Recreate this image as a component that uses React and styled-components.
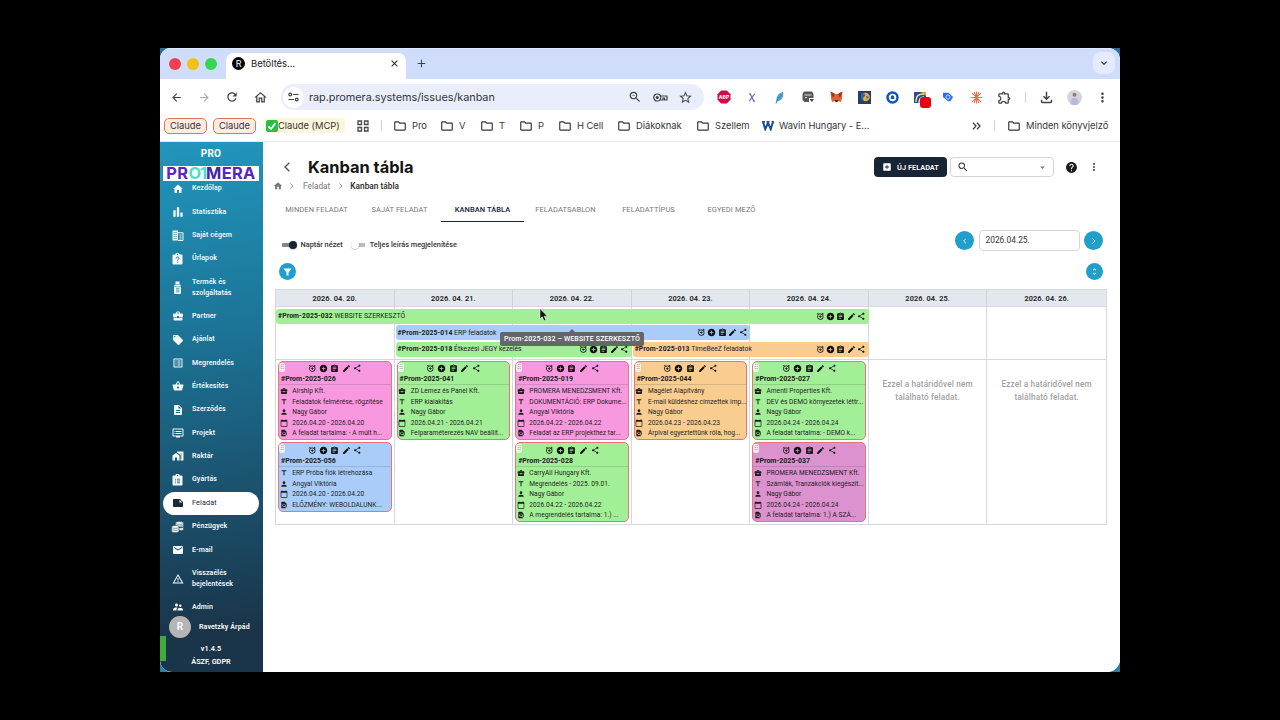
import React from 'react';
import styled, { createGlobalStyle } from 'styled-components';
import {
  MdHome, MdBarChart, MdBusinessCenter, MdLocalOffer, MdListAlt, MdShoppingBasket,
  MdDescription, MdDvr, MdHomeWork, MdNote, MdEmail, MdWarningAmber, MdSupervisorAccount,
  MdAddAlarm, MdAddCircle, MdAssignment, MdEdit, MdShare, MdTitle, MdPerson, MdCalendarToday, MdFindInPage,
  MdAddBox, MdHelp, MdMoreVert, MdSearch, MdArrowDropDown, MdUnfoldMore,
  MdZoomOut, MdStarBorder, MdOutlineExtension, MdOutlineFileDownload, MdArrowBack, MdArrowForward,
  MdRefresh, MdOutlineHome, MdClose, MdAdd, MdOutlineFolder, MdKeyboardArrowDown,
} from 'react-icons/md';

const GlobalStyle = createGlobalStyle`
  * {
    box-sizing: border-box;
  }

  body {
    margin: 0;
    background: #000;
    font-family: Roboto, 'Liberation Sans', sans-serif;
    overflow: hidden;
  }

  svg {
    display: block;
    flex: none;
  }
`;

const Screen = styled.div`
  width: 1280px;
  height: 720px;
  padding: 48px 160px;
  background: #000;
`;

const Desktop = styled.div`
  width: 960px;
  height: 624px;
  background: linear-gradient(to bottom, #2f6d8f, #2b7f9c);
`;

const Window = styled.div`
  height: 624px;
  display: flex;
  flex-direction: column;
  background: #fff;
  border-radius: 11px 12px 13px 12px;
  overflow: hidden;
`;

/* ---------- browser chrome ---------- */

const TabStrip = styled.div`
  height: 31px;
  display: flex;
  align-items: flex-end;
  background: #d0ddfa;
  border-top: 1px solid #dfe8fb;
`;

const Lights = styled.div`
  width: 66px;
  height: 31px;
  display: flex;
  align-items: center;
  gap: 6px;
  padding-left: 9px;
`;

const Light = styled.span`
  width: 12px;
  height: 12px;
  border-radius: 50%;
  background: ${({ $color }) => $color};
`;

const BrowserTab = styled.div`
  width: 180px;
  height: 26px;
  display: flex;
  align-items: center;
  padding: 0 6px 5px 6px;
  background: #fff;
  border-radius: 8px 8px 0 0;
  font: 9.5px Inter, sans-serif;
  letter-spacing: -0.05px;
  color: #222;

  .label {
    flex: 1;
    margin-left: 6px;
  }
`;

const Favicon = styled.span`
  width: 13px;
  height: 13px;
  border-radius: 50%;
  background: #000;
  color: #fff;
  font: 9px/13px Inter, sans-serif;
  text-align: center;
`;

const NewTab = styled.div`
  flex: 1;
  height: 31px;
  display: flex;
  align-items: center;
  padding-left: 9px;
  color: #3b4253;
`;

const TabSearch = styled.div`
  width: 22px;
  height: 22px;
  margin: 0 5px 5px 0;
  border-radius: 7px;
  display: flex;
  align-items: center;
  justify-content: center;
  background: #e3ebfc;
  color: #222;
`;

const Toolbar = styled.div`
  height: 36px;
  display: flex;
  align-items: center;
  padding-left: 2px;
  color: #3f4247;
`;

const ToolCell = styled.div`
  width: ${({ $w = 28 }) => $w}px;
  display: flex;
  justify-content: center;
  align-items: center;
  position: relative;
  color: ${({ $color }) => $color || 'inherit'};
`;

const AddressBar = styled.div`
  width: 423px;
  height: 26px;
  margin: 0 6px 0 7px;
  display: flex;
  align-items: center;
  background: #eaeefa;
  border-radius: 13px;
  padding: 0 6.5px 0 2px;

  .url {
    flex: 1;
    margin-left: 5px;
    font: 10.9px Inter, sans-serif;
    letter-spacing: -0.05px;
    color: #33363c;
  }
`;

const SiteInfo = styled.span`
  width: 21px;
  height: 21px;
  border-radius: 50%;
  background: #fff;
  display: flex;
  align-items: center;
  justify-content: center;
`;

const Divider = styled.span`
  width: 1px;
  height: 11px;
  background: #c6d3ee;
`;

const RedBadge = styled.span`
  position: absolute;
  left: 14px;
  top: 6px;
  width: 11px;
  height: 11px;
  border-radius: 3px;
  background: #e60012;
`;

const Bookmarks = styled.div`
  height: 27px;
  display: flex;
  align-items: center;
  padding: 0 12px 5px 4px;
  border-bottom: 1px solid #e8e8ea;
  font: 9.4px Inter, sans-serif;
  letter-spacing: -0.03px;
  color: #33363b;
`;

const Chip = styled.span`
  width: 43px;
  height: 16px;
  margin-right: 6px;
  border: 1px solid #d5795b;
  border-radius: 5px;
  background: #fdeae1;
  line-height: 14px;
  text-align: center;
`;

const McpChip = styled.span`
  width: 82px;
  height: 15px;
  margin-left: 1px;
  display: flex;
  align-items: center;
  padding-left: 3px;
  background: #fcf7d8;
  border-radius: 4px;
  white-space: nowrap;
`;

const Bookmark = styled.span`
  width: ${({ $w }) => $w}px;
  display: flex;
  align-items: center;
  gap: 5px;
  white-space: nowrap;
`;

/* ---------- app ---------- */

const AppBody = styled.div`
  flex: 1;
  display: flex;
  min-height: 0;
`;

const Sidebar = styled.nav`
  width: 103px;
  position: relative;
  display: flex;
  flex-direction: column;
  background: linear-gradient(172deg, #2196bd 0%, #1c7598 35%, #1b5673 62%, #1a3449 92%);
  border-radius: 0 0 0 12px;
  color: #fff;
`;

const Plan = styled.div`
  height: 24px;
  line-height: 24px;
  text-align: center;
  font-size: 10px;
  font-weight: 700;
  letter-spacing: 0.2px;
  padding-right: 1px;
`;

const Logo = styled.div`
  position: relative;
  z-index: 1;
  width: 96px;
  height: 15px;
  margin: 0 0 -4px 3px;
  background: #fff;
  display: flex;
  align-items: center;
  justify-content: center;
  font: 700 16.4px/15px Inter, sans-serif;
  letter-spacing: 0.35px;
  color: #5a24c9;

  .mint {
    color: #4be0c8;
    letter-spacing: -1px;
  }

  .dark {
    color: #4425a8;
  }
`;

const NavItem = styled.div`
  height: ${({ $tall }) => ($tall ? 34.2 : 23.37)}px;
  width: 96px;
  margin-left: 3px;
  display: flex;
  align-items: center;
  padding-left: 8.5px;
  gap: 8.5px;
  border-radius: 12px;
  font-size: 7px;
  line-height: 10.7px;
  font-weight: 600;
  letter-spacing: 0.1px;
  white-space: pre;
  background: ${({ $active }) => ($active ? '#fff' : 'transparent')};
  color: ${({ $active }) => ($active ? '#1c2b3a' : '#f2f8fb')};

  ${({ $active }) => $active && 'font-weight: 400; font-size: 7.3px;'}
`;

const UserRow = styled.div`
  height: 22px;
  margin-top: -3px;
  display: flex;
  align-items: center;
  gap: 8px;
  padding-left: 9px;
  font-size: 7px;
  font-weight: 600;
  letter-spacing: 0.12px;
`;

const Avatar = styled.span`
  width: 22px;
  height: 22px;
  border-radius: 50%;
  background: #b5b5b5;
  font-size: 10px;
  line-height: 22px;
  text-align: center;
`;

const Version = styled.div`
  padding: 4px 1px 0 0;
  text-align: center;
  font-size: 7.3px;
  font-weight: 600;
  line-height: 13px;
`;

const GreenFlag = styled.span`
  position: absolute;
  left: 0;
  bottom: 11px;
  width: 6px;
  height: 25px;
  background: #43a83f;
`;

const Main = styled.main`
  flex: 1;
  padding: 14px 12px 0 12px;
  background: #fff;
  color: #1b1b1b;
`;

const Row = styled.div`
  display: flex;
  align-items: center;
`;

const HeaderRow = styled(Row)`
  height: 22px;
  padding-right: 8px;
`;

const Title = styled.h1`
  flex: 1;
  margin: -1px 0 0 9px;
  font: 700 16.4px/22px Inter, sans-serif;
  color: #141414;
`;

const NewTaskButton = styled.button`
  width: 73px;
  height: 20px;
  margin-right: 3px;
  padding: 0;
  border: 0;
  border-radius: 4px;
  display: flex;
  align-items: center;
  justify-content: center;
  gap: 5px;
  background: #182534;
  color: #fff;
  font: 600 7.4px Roboto, sans-serif;
`;

const SearchBox = styled(Row)`
  width: 104px;
  height: 20px;
  padding: 0 5px 0 6px;
  justify-content: space-between;
  border: 1px solid #d4d5da;
  border-radius: 4px;
  color: #333;
`;

const Crumbs = styled(Row)`
  height: 16px;
  font-size: 8.3px;
  color: #777;

  .current {
    color: #2a2a2a;
    font-weight: 500;
  }
`;

const Tabs = styled.div`
  height: 28px;
  display: flex;
  align-items: flex-end;
`;

const Tab = styled.div`
  width: 83px;
  height: 24px;
  line-height: 24px;
  text-align: center;
  font-size: 7.5px;
  letter-spacing: 0.08px;
  white-space: nowrap;
  color: ${({ $active }) => ($active ? '#182534' : '#777')};
  font-weight: ${({ $active }) => ($active ? 500 : 400)};
  border-bottom: ${({ $active }) => ($active ? '1.5px solid #182534' : '1.5px solid transparent')};
`;

const Controls = styled(Row)`
  height: 22px;
  margin-top: 7.5px;
  padding-right: 5px;
  font-size: 7.35px;
  font-weight: 500;
  color: #333;

  .left {
    flex: 1;
    display: flex;
    align-items: center;
    padding: 8px 0 0 6.5px;
  }
`;

const Toggle = styled.span`
  width: 15px;
  height: 8px;
  margin: 0 4px 0 0;
  display: flex;
  align-items: center;
  justify-content: ${({ $on }) => ($on ? 'flex-end' : 'flex-start')};
  background: linear-gradient(${({ $on }) => ($on ? '#7f868e, #7f868e' : '#bbb, #bbb')}) center / 14px 4px no-repeat;
  border-radius: 4px;

  &:after {
    content: '';
    width: 8px;
    height: 8px;
    border-radius: 50%;
    background: ${({ $on }) => ($on ? '#182534' : '#fff')};
    box-shadow: 0 0.5px 1px rgba(0, 0, 0, 0.35);
  }
`;

const RoundButton = styled.span`
  width: ${({ $size }) => $size}px;
  height: ${({ $size }) => $size}px;
  border-radius: 50%;
  display: flex;
  align-items: center;
  justify-content: center;
  background: #219fcb;
  color: #fff;
`;

const DateField = styled.span`
  width: 101px;
  height: 21px;
  margin: 0 4.5px;
  padding-left: 6px;
  border: 1px solid #d4d5da;
  border-radius: 4px;
  font-size: 8.4px;
  font-weight: 400;
  line-height: 19px;
`;

const FilterRow = styled(Row)`
  height: 17px;
  margin: 11.5px 5px 8.5px 4px;
  justify-content: space-between;
`;

const Board = styled.div`
  position: relative;
  width: 832px;
  border: 1px solid #d6d8dc;
`;

const Week = styled.div`
  display: grid;
  grid-template-columns: repeat(7, minmax(0, 1fr));
`;

const DayHead = styled.div`
  height: 17px;
  line-height: 18px;
  text-align: center;
  background: #e3e8ee;
  border-right: 1px solid #cfd3d9;
  border-bottom: 1px solid #d6d8dc;
  font-size: 7.4px;
  font-weight: 600;
  letter-spacing: 0.06px;

  &:last-child {
    border-right: 0;
  }
`;

const Lanes = styled(Week)`
  height: 53px;
  grid-template-rows: repeat(3, 15px);
  row-gap: 1.5px;
  padding-top: 2px;
  border-bottom: 1px solid #d6d8dc;
`;

const LaneCell = styled.div`
  grid-column: ${({ $col }) => $col};
  grid-row: 1 / 4;
  margin: -2px 0 -4px;
  border-right: ${({ $col }) => ($col < 7 ? '1px solid #d6d8dc' : '0')};
`;

const Bar = styled.div`
  grid-column: ${({ $from, $to }) => `${$from} / ${$to + 1}`};
  grid-row: ${({ $lane }) => $lane};
  margin-left: ${({ $from }) => ($from > 1 ? 1 : 0)}px;
  padding: 0 3px 0 2px;
  display: flex;
  align-items: center;
  justify-content: space-between;
  background: ${({ $color }) => $color};
  border-radius: 3px;
  font-size: 6.8px;
  letter-spacing: 0;
  white-space: pre;
  z-index: 1;

  b {
    font-weight: 700;
    letter-spacing: 0.12px;
  }
`;

const Days = styled(Week)`
  height: 164px;
`;

const Day = styled.div`
  min-width: 0;
  padding: 1px 2px 0;
  display: flex;
  flex-direction: column;
  gap: 2px;
  border-right: 1px solid #d6d8dc;

  &:last-child {
    border-right: 0;
  }
`;

const Empty = styled.p`
  margin: 17px 0 0;
  text-align: center;
  font-size: 8.2px;
  font-weight: 500;
  line-height: 13px;
  letter-spacing: 0.16px;
  color: #a2a2a2;
  white-space: pre;
`;

const Card = styled.article`
  position: relative;
  padding: 2.2px 0 1.2px;
  background: ${({ $color }) => $color};
  border: 1.5px solid #e2757e;
  border-radius: 5px;
`;

const Handle = styled.span`
  position: absolute;
  left: 0;
  top: 1px;
  width: 6px;
  height: 9px;
  background: rgba(255, 255, 255, 0.75);
  border-radius: 2px;
  color: #888;
  font-size: 6px;
  line-height: 8px;
  text-align: center;
`;

const Actions = styled.div`
  display: flex;
  align-items: center;
  justify-content: center;
  gap: ${({ $gap }) => $gap}px;
  color: #111;
`;

const CardTitle = styled.div`
  height: 11px;
  margin: 1px 0 1.6px;
  padding: 0 2px;
  line-height: 10.5px;
  font-size: 7px;
  font-weight: 700;
  letter-spacing: 0;
  border-bottom: 1px solid rgba(80, 80, 80, 0.2);
`;

const CardLine = styled.div`
  height: 10.4px;
  display: flex;
  align-items: center;
  gap: 4.5px;
  padding-left: 0.7px;
  font-size: 6.6px;
  letter-spacing: 0.03px;
  white-space: nowrap;
  color: #1d1d1d;
`;

const Tooltip = styled.div`
  position: absolute;
  left: 224px;
  top: 42px;
  z-index: 3;
  width: 144px;
  height: 14px;
  border-radius: 2px;
  background: rgba(92, 94, 97, 0.93);
  color: #fff;
  font-size: 7.1px;
  font-weight: 500;
  line-height: 14px;
  text-align: center;
  letter-spacing: 0.1px;

  &:before {
    content: '';
    position: absolute;
    left: 69px;
    top: -3px;
    border: 3px solid transparent;
    border-top: 0;
    border-bottom-color: rgba(92, 94, 97, 0.93);
  }
`;

const Pointer = styled.svg`
  position: absolute;
  left: 263px;
  top: 18px;
  z-index: 4;
`;

const GREEN = '#a2ef98';
const BLUE = '#a9cdf8';
const ORANGE = '#f9cd90';
const PINK = '#f898de';
const PURPLE = '#dc92cf';

const FormIcon = () => (
  <svg width="11" height="12" viewBox="0 0 22 24" fill="currentColor">
    <path d="M19 3h-4a4 4 0 0 0-8 0H3a2 2 0 0 0-2 2v16a2 2 0 0 0 2 2h16a2 2 0 0 0 2-2V5a2 2 0 0 0-2-2zm-8-1.500a1.500 1.500 0 1 1 0 3 1.500 1.500 0 0 1 0-3z" />
    <path d="M8 11c0-4 6-4 6-.5 0 2-3 2.200-3 4.500M11 17.200v2" fill="none" stroke="#23759a" strokeWidth="2" />
  </svg>
);

const ClipboardIcon = () => (
  <svg width="11" height="12" viewBox="0 0 22 24" fill="currentColor">
    <path d="M19 3h-4a4 4 0 0 0-8 0H3a2 2 0 0 0-2 2v16a2 2 0 0 0 2 2h16a2 2 0 0 0 2-2V5a2 2 0 0 0-2-2zm-8-1.500a1.500 1.500 0 1 1 0 3 1.500 1.500 0 0 1 0-3z" />
    <path d="M6 10.500h2M10 10.500h6M6 14h2M10 14h6M6 17.500h2M10 17.500h6" fill="none" stroke="#1c5773" strokeWidth="1.600" />
  </svg>
);

const BottleIcon = () => (
  <svg width="11" height="14" viewBox="0 0 22 28" fill="currentColor">
    <path d="M7 1h8v5H7zM6 7h10l2 3H4z" />
    <path d="M4 11h14v13a2 2 0 0 1-2 2H6a2 2 0 0 1-2-2z" />
    <path d="M8 14.500h7M8 18h7M8 21.500h7" stroke="#2280a5" strokeWidth="1.500" />
  </svg>
);

const BuildingIcon = () => (
  <svg width="12" height="11" viewBox="0 0 24 22" fill="currentColor">
    <path d="M1 1h11v20H1z" />
    <path d="M12 5.500h10V21H12" fill="none" stroke="currentColor" strokeWidth="2" />
    <path d="M15 10h4M15 14h4M15 18h4" stroke="currentColor" strokeWidth="2" />
    <path d="M3 5h7M3 9h7M3 13h7M3 17h7" stroke="#2a86ab" strokeWidth="1.200" />
  </svg>
);

const CoinsIcon = () => (
  <svg width="13" height="12" viewBox="0 0 26 24" fill="currentColor" stroke="#1b4a65" strokeWidth="1">
    <path d="M9 4v8h16V4c0-4-16-4-16 0z" />
    <path d="M9 4.500c1 3 15 3 16 0M9 8c1 3 15 3 16 0M10 12c3 3 14 2 15 0v5c-1 2-5 2-7 2" />
    <path d="M1 12v8c0 4 15 4 15 0v-8c0-4-15-4-15 0z" />
    <path d="M1 12.500c1 3 14 3 15 0M1 16.500c1 3 14 3 15 0" fill="none" />
  </svg>
);

const FunnelIcon = () => (
  <svg width="9" height="8" viewBox="0 0 9 8" fill="currentColor">
    <path d="M.5 .5h8L5.500 4.500v3h-2v-3z" />
  </svg>
);

const ChevronIcon = ({ size = 8, left }) => (
  <svg width={size * 0.6} height={size} viewBox="0 0 6 10" fill="none" stroke="currentColor" strokeWidth="1.4">
    <path d={left ? 'M5.300 .7L1 5l4.300 4.300' : 'M.7 .7L5 5 .7 9.300'} />
  </svg>
);

const TuneIcon = () => (
  <svg width="11" height="10" viewBox="0 0 22 20" fill="none" stroke="currentColor" strokeWidth="2.4">
    <circle cx="4.500" cy="5" r="2.800" />
    <path d="M10 5h11M1 15h11" />
    <circle cx="17.500" cy="15" r="2.800" />
  </svg>
);

const KeyIcon = () => (
  <svg width="15" height="9" viewBox="0 0 30 18" fill="none" stroke="currentColor" strokeWidth="2.400">
    <path d="M15 6h13v8h-5v-4h-3v4h-5" />
    <circle cx="8.500" cy="9" r="7" />
    <circle cx="8.500" cy="9" r="2" fill="currentColor" />
  </svg>
);

const AppsIcon = () => (
  <svg width="12" height="12" viewBox="0 0 12 12" fill="none" stroke="#44474c" strokeWidth="1.3">
    <path d="M1 1h3.500v3.500H1zM7.500 1H11v3.500H7.500zM1 7.500h3.500V11H1zM7.500 7.500H11V11H7.500z" />
  </svg>
);

const extensions = [
  <svg key="abp" width="14" height="14" viewBox="0 0 14 14">
    <path d="M4.200 .5h5.600l3.700 3.700v5.600l-3.700 3.700H4.200L.5 9.800V4.200z" fill="#cf0a45" />
    <text x="7" y="9" textAnchor="middle" fontFamily="Inter" fontSize="5" fontWeight="700" fill="#fff">ABP</text>
  </svg>,
  <svg key="x" width="8" height="9" viewBox="0 0 9 10" fill="none" strokeWidth="1.400">
    <path d="M1 1h1.500l4 8H8" stroke="#7a5cc4" />
    <path d="M7.500 1L1.500 9" stroke="#5b84c9" />
  </svg>,
  <svg key="feather" width="10" height="13" viewBox="0 0 10 13">
    <path d="M8 .5C3 3 1 5 1.500 10.500c4-.5 8-3 6.500-10z" fill="#55a5d2" />
    <path d="M1 12.500C2 8 4 6 7 3.500" stroke="#327ea8" fill="none" />
  </svg>,
  <svg key="mail" width="12" height="12" viewBox="0 0 12 12">
    <path d="M2 .5h8L11.500 3v4H7v4H2.500L.5 9V3z" fill="#56585a" />
    <path d="M2.500 4h7M3 6.500h2" stroke="#ddd" />
    <path d="M7.500 8H12l-2.200 3z" fill="#444" />
  </svg>,
  <svg key="fox" width="13" height="12" viewBox="0 0 13 12">
    <path d="M.5.5L5 3h3L12.500.5l-.6 7L11 11l-3-1H5l-3 1-.9-3.500z" fill="#e4602d" />
    <path d="M.5.5L5 3 3 7zM12.500.5L8 3l2 4z" fill="#913824" />
    <path d="M5 9h3l-.5 2h-2z" fill="#3b2620" />
  </svg>,
  <svg key="globe" width="13" height="13" viewBox="0 0 13 13">
    <path d="M0 0h13v13H0z" fill="#28405e" />
    <circle cx="7.500" cy="6" r="4.300" fill="#e8ad37" />
    <path d="M3 2l4 1v2L5 7l1 3-3-2zM8 5l3 1-2 2z" fill="#2a65c0" />
  </svg>,
  <svg key="ring" width="13" height="13" viewBox="0 0 13 13" fill="none">
    <circle cx="6.500" cy="6.500" r="5" stroke="#1554bb" strokeWidth="2.500" />
    <path d="M4.800 8V6a1.700 1.700 0 0 1 3.400 0v2z" fill="#1554bb" />
  </svg>,
  <React.Fragment key="rec">
    <svg width="13" height="13" viewBox="0 0 13 13">
      <path d="M0 1h12v11H0z" fill="#34506e" />
      <path d="M7 1h5v4z" fill="#e3963b" />
      <path d="M2 11c0-7 3-8 8-8M5 12c0-4 1-6 5-6" stroke="#dde6ef" strokeWidth="1.300" fill="none" />
    </svg>
    <RedBadge />
  </React.Fragment>,
  <svg key="tag" width="12" height="12" viewBox="0 0 13 12">
    <path d="M1 1.500h6L12 6 9 10.500H6.500L1 6z" fill="#2e71d6" />
    <circle cx="6.500" cy="6" r="2.200" fill="none" stroke="#c7dcfb" />
  </svg>,
  <svg key="claude" width="13" height="13" viewBox="0 0 13 13" stroke="#dc7656">
    <path d="M6.500 .5v12M.5 6.500h12M2.200 2.200l8.600 8.600M10.800 2.200l-8.600 8.600M4 .9l5 11.200M9 .9L4 12.100" strokeWidth="1.100" />
  </svg>,
  <MdOutlineExtension key="ext" size={15} />,
];

const folders = [
  ['Pro', 47], ['V', 40], ['T', 39], ['P', 39], ['H Cell', 59], ['Diákoknak', 79], ['Szellem', 66],
];

const navItems = [
  { label: 'Kezdőlap', icon: <MdHome size={12} /> },
  { label: 'Statisztika', icon: <MdBarChart size={14} /> },
  { label: 'Saját cégem', icon: <BuildingIcon /> },
  { label: 'Űrlapok', icon: <FormIcon /> },
  { label: 'Termék és\nszolgáltatás', icon: <BottleIcon />, tall: true },
  { label: 'Partner', icon: <MdBusinessCenter size={12} /> },
  { label: 'Ajánlat', icon: <MdLocalOffer size={12} /> },
  { label: 'Megrendelés', icon: <MdListAlt size={12} /> },
  { label: 'Értékesítés', icon: <MdShoppingBasket size={12} /> },
  { label: 'Szerződés', icon: <MdDescription size={12} /> },
  { label: 'Projekt', icon: <MdDvr size={12} /> },
  { label: 'Raktár', icon: <MdHomeWork size={12} /> },
  { label: 'Gyártás', icon: <ClipboardIcon /> },
  { label: 'Feladat', icon: <MdNote size={12} />, active: true },
  { label: 'Pénzügyek', icon: <CoinsIcon /> },
  { label: 'E-mail', icon: <MdEmail size={12} /> },
  { label: 'Visszaélés\nbejelentések', icon: <MdWarningAmber size={12} />, tall: true },
  { label: 'Admin', icon: <MdSupervisorAccount size={12} /> },
];

const bars = [
  { id: '032', name: 'WEBSITE SZERKESZTŐ', lane: 1, from: 1, to: 5, color: GREEN },
  { id: '014', name: 'ERP feladatok', lane: 2, from: 2, to: 4, color: BLUE },
  { id: '018', name: 'Étkezési JEGY kezelés', lane: 3, from: 2, to: 3, color: GREEN },
  { id: '013', name: 'TimeBeeZ feladatok', lane: 3, from: 4, to: 5, color: ORANGE },
];

const days = [
  {
    date: '2026. 04. 20.',
    cards: [
      { id: '026', color: PINK, company: 'Airship Kft.', title: 'Feladatok felmérése, rögzítése', user: 'Nagy Gábor', text: 'A feladat tartalma: - A múlt h...' },
      { id: '056', color: BLUE, title: 'ERP Próba fiók létrehozása', user: 'Angyal Viktória', text: 'ELŐZMÉNY: WEBOLDALUNK...' },
    ],
  },
  {
    date: '2026. 04. 21.',
    cards: [
      { id: '041', color: GREEN, company: 'ZD Lemez és Panel Kft.', title: 'ERP kialakítás', user: 'Nagy Gábor', text: 'Felparaméterezés NAV beállít...' },
    ],
  },
  {
    date: '2026. 04. 22.',
    cards: [
      { id: '019', color: PINK, company: 'PROMERA MENEDZSMENT Kft.', title: 'DOKUMENTÁCIÓ: ERP Dokume...', user: 'Angyal Viktória', text: 'Feladat az ERP projekthez tar...' },
      { id: '028', color: GREEN, company: 'CarryAll Hungary Kft.', title: 'Megrendelés - 2025. 09.01.', user: 'Nagy Gábor', text: 'A megrendelés tartalma: 1.) ...' },
    ],
  },
  {
    date: '2026. 04. 23.',
    cards: [
      { id: '044', color: ORANGE, company: 'Magélet Alapítvány', title: 'E-mail küldéshez címzettek imp...', user: 'Nagy Gábor', text: 'Árpival egyeztettünk róla, hog...' },
    ],
  },
  {
    date: '2026. 04. 24.',
    cards: [
      { id: '027', color: GREEN, company: 'Amenti Properties Kft.', title: 'DEV és DEMO környezetek léttr...', user: 'Nagy Gábor', text: 'A feladat tartalma: - DEMO k...' },
      { id: '037', color: PURPLE, company: 'PROMERA MENEDZSMENT Kft.', title: 'Számlák, Tranzakciók kiegészít...', user: 'Nagy Gábor', text: 'A feladat tartalma: 1.) A SZÁ...' },
    ],
  },
  { date: '2026. 04. 25.', cards: [] },
  { date: '2026. 04. 26.', cards: [] },
];

const TaskActions = ({ gap }) => (
  <Actions $gap={gap}>
    <MdAddAlarm size={8.5} />
    <MdAddCircle size={9} />
    <MdAssignment size={9} />
    <MdEdit size={9} />
    <MdShare size={8.5} />
  </Actions>
);

const TaskCard = ({ card, date }) => {
  const day = date.replace(/ /g, '').slice(0, -1);
  return (
    <Card $color={card.color}>
      <Handle>⠿</Handle>
      <TaskActions gap={2.6} />
      <CardTitle>#Prom-2025-{card.id}</CardTitle>
      {card.company && <CardLine><MdBusinessCenter size={8} />{card.company}</CardLine>}
      <CardLine><MdTitle size={8} />{card.title}</CardLine>
      <CardLine><MdPerson size={8} />{card.user}</CardLine>
      <CardLine><MdCalendarToday size={8} />{day} - {day}</CardLine>
      <CardLine><MdFindInPage size={8} />{card.text}</CardLine>
    </Card>
  );
};

const BrowserChrome = () => (
  <>
    <TabStrip>
      <Lights>
        <Light $color="#f23f50" />
        <Light $color="#f2c112" />
        <Light $color="#33d552" />
      </Lights>
      <BrowserTab>
        <Favicon>R</Favicon>
        <span className="label">Betöltés...</span>
        <MdClose size={11} />
      </BrowserTab>
      <NewTab><MdAdd size={13} /></NewTab>
      <TabSearch><MdKeyboardArrowDown size={12} /></TabSearch>
    </TabStrip>
    <Toolbar>
      <ToolCell><MdArrowBack size={13} /></ToolCell>
      <ToolCell $color="#a9abaf"><MdArrowForward size={13} /></ToolCell>
      <ToolCell><MdRefresh size={14} /></ToolCell>
      <ToolCell><MdOutlineHome size={15} /></ToolCell>
      <AddressBar>
        <SiteInfo><TuneIcon /></SiteInfo>
        <span className="url">rap.promera.systems/issues/kanban</span>
        <ToolCell $w={25}><MdZoomOut size={14} /></ToolCell>
        <ToolCell $w={25}><KeyIcon /></ToolCell>
        <ToolCell $w={25}><MdStarBorder size={15} /></ToolCell>
      </AddressBar>
      {extensions.map((icon) => <ToolCell key={icon.key}>{icon}</ToolCell>)}
      <ToolCell $w={14}><Divider /></ToolCell>
      <ToolCell><MdOutlineFileDownload size={17} /></ToolCell>
      <ToolCell>
        <svg width="15" height="15" viewBox="0 0 15 15">
          <circle cx="7.500" cy="7.500" r="7.500" fill="#d6d3dc" />
          <path d="M3.500 14c0-4 1-6 4-6s4 2 4 6a7 7 0 0 1-8 0z" fill="#b4bcda" />
          <circle cx="7.500" cy="4.800" r="2" fill="#9b7868" />
        </svg>
      </ToolCell>
      <ToolCell><MdMoreVert size={15} /></ToolCell>
    </Toolbar>
    <Bookmarks>
      <Chip>Claude</Chip>
      <Chip>Claude</Chip>
      <McpChip>
        <svg width="12" height="12" viewBox="0 0 12 12">
          <rect width="12" height="12" rx="2" fill="#27bf45" />
          <path d="M2.500 6.500L5 9l4.500-6" fill="none" stroke="#fff" strokeWidth="1.800" />
        </svg>
        Claude (MCP)
      </McpChip>
      <ToolCell $w={36}><AppsIcon /></ToolCell>
      <ToolCell $w={1}><Divider /></ToolCell>
      <ToolCell $w={11} />
      {folders.map(([name, width]) => (
        <Bookmark key={name} $w={width}><MdOutlineFolder size={14} />{name}</Bookmark>
      ))}
      <Bookmark $w={205}>
        <svg width="12" height="10" viewBox="0 0 13 11" fill="none" stroke="#1e4e8c" strokeWidth="2.200">
          <path d="M1 1l2.500 8L6.500 2l3 7L12 1M0 1h3M5 1h3M10.500 1H13" />
        </svg>
        Wavin Hungary - E...
      </Bookmark>
      <ToolCell $w={18}>
        <svg width="9" height="8" viewBox="0 0 9 8" fill="none" stroke="#3f4247" strokeWidth="1.300">
          <path d="M1 .8L4 4 1 7.200M5 .8L8 4 5 7.200" />
        </svg>
      </ToolCell>
      <ToolCell $w={18}><Divider /></ToolCell>
      <ToolCell $w={4} />
      <Bookmark $w={101}><MdOutlineFolder size={14} />Minden könyvjelző</Bookmark>
    </Bookmarks>
  </>
);

const SideMenu = () => (
  <Sidebar>
    <Plan>PRO</Plan>
    <Logo>PR<span className="mint">O1</span><span className="dark">M</span>ERA</Logo>
    {navItems.map((item) => (
      <NavItem key={item.label} $tall={item.tall} $active={item.active}>
        <ToolCell $w={12}>{item.icon}</ToolCell>
        {item.label}
      </NavItem>
    ))}
    <UserRow><Avatar>R</Avatar>Ravetzky Árpád</UserRow>
    <Version>v1.4.5<br />ÁSZF, GDPR</Version>
    <GreenFlag />
  </Sidebar>
);

const KanbanBoard = () => (
  <Board>
    <Week>
      {days.map((d) => <DayHead key={d.date}>{d.date}</DayHead>)}
    </Week>
    <Lanes>
      {days.map((d, i) => <LaneCell key={d.date} $col={i + 1} />)}
      {bars.map((bar) => (
        <Bar key={bar.id} $lane={bar.lane} $from={bar.from} $to={bar.to} $color={bar.color}>
          <span><b>#Prom-2025-{bar.id}</b> {bar.name}</span>
          <TaskActions gap={1.5} />
        </Bar>
      ))}
    </Lanes>
    <Days>
      {days.map((d) => (
        <Day key={d.date}>
          {d.cards.map((card) => <TaskCard key={card.id} card={card} date={d.date} />)}
          {d.cards.length === 0 && <Empty>{'Ezzel a határidővel nem\ntalálható feladat.'}</Empty>}
        </Day>
      ))}
    </Days>
    <Tooltip>Prom-2025-032 – WEBSITE SZERKESZTŐ</Tooltip>
    <Pointer width="9" height="14" viewBox="0 0 9 14">
      <path d="M1 .5v10.300l2.300-2 1.700 4 1.800-.8-1.700-3.800h3.200z" fill="#111" stroke="#fff" strokeWidth="0.500" />
    </Pointer>
  </Board>
);

const tabs = ['MINDEN FELADAT', 'SAJÁT FELADAT', 'KANBAN TÁBLA', 'FELADATSABLON', 'FELADATTÍPUS', 'EGYEDI MEZŐ'];

const App = () => {
  return (
    <Screen>
      <GlobalStyle />
      <Desktop>
        <Window>
          <BrowserChrome />
          <AppBody>
            <SideMenu />
            <Main>
              <HeaderRow>
                <ToolCell $w={24} $color="#555"><ChevronIcon size={10} left /></ToolCell>
                <Title>Kanban tábla</Title>
                <NewTaskButton><MdAddBox size={10} />ÚJ FELADAT</NewTaskButton>
                <SearchBox><MdSearch size={12} /><MdArrowDropDown size={11} color="#777" /></SearchBox>
                <ToolCell $w={34}><MdHelp size={13} /></ToolCell>
                <ToolCell $w={12} $color="#555"><MdMoreVert size={12} /></ToolCell>
              </HeaderRow>
              <Crumbs>
                <ToolCell $w={6}><MdHome size={10} /></ToolCell>
                <ToolCell $w={22}><ChevronIcon size={6} /></ToolCell>
                Feladat
                <ToolCell $w={20}><ChevronIcon size={6} /></ToolCell>
                <span className="current">Kanban tábla</span>
              </Crumbs>
              <Tabs>
                {tabs.map((tab) => <Tab key={tab} $active={tab === 'KANBAN TÁBLA'}>{tab}</Tab>)}
              </Tabs>
              <Controls>
                <div className="left">
                  <Toggle $on />
                  Naptár nézet
                  <ToolCell $w={8} />
                  <Toggle />
                  Teljes leírás megjelenítése
                </div>
                <RoundButton $size={19}><ChevronIcon size={6} left /></RoundButton>
                <DateField>2026.04.25.</DateField>
                <RoundButton $size={19}><ChevronIcon size={6} /></RoundButton>
              </Controls>
              <FilterRow>
                <RoundButton $size={17}><FunnelIcon /></RoundButton>
                <RoundButton $size={17}><MdUnfoldMore size={9} /></RoundButton>
              </FilterRow>
              <KanbanBoard />
            </Main>
          </AppBody>
        </Window>
      </Desktop>
    </Screen>
  );
};

export default App;
